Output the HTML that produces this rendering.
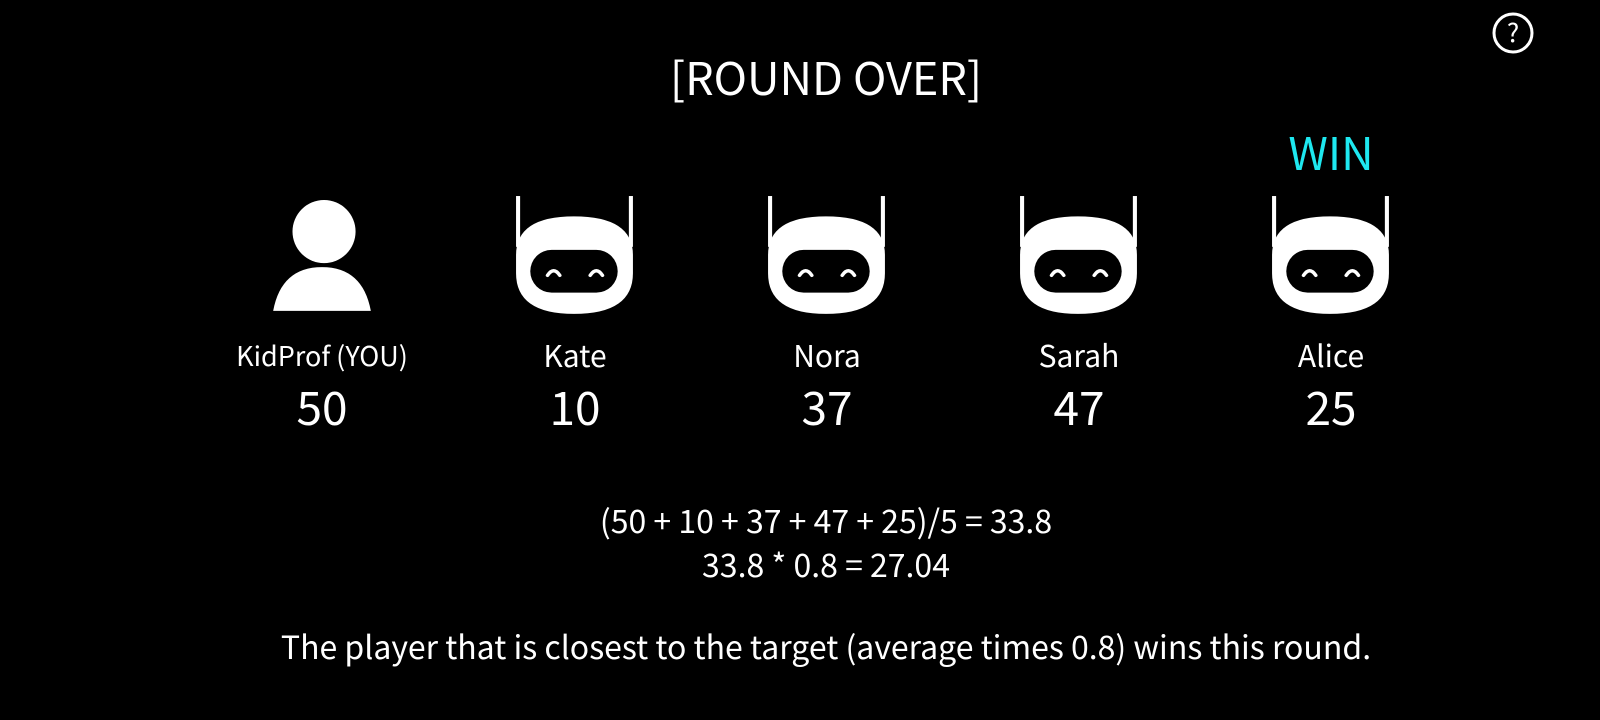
<!DOCTYPE html>
<html><head><meta charset="utf-8"><style>
html,body{margin:0;padding:0;background:#000;}
body{width:1600px;height:720px;position:relative;overflow:hidden;color:#fff;font-family:"Noto Sans CJK SC","Liberation Sans",sans-serif;}
.t{position:absolute;white-space:nowrap;transform:translateX(-50%);line-height:1;}
svg{position:absolute;}
.n{font-size:30px;top:339px;}
.s{font-size:46px;top:383px;}
</style></head><body>
<svg style="left:1491px;top:12px" width="44" height="44" viewBox="0 0 44 44"><circle cx="22" cy="21" r="19" fill="none" stroke="#fff" stroke-width="3"/><text x="22" y="30" text-anchor="middle" fill="#fff" font-size="26" font-family="Noto Sans CJK SC,Liberation Sans,sans-serif">?</text></svg>
<div class="t" style="left:826px;top:53px;font-size:45px;">[ROUND OVER]</div>
<div class="t" style="left:1331px;top:128px;font-size:45px;color:#1ee8f0;">WIN</div>

<svg style="left:271px;top:199px" width="102" height="117" viewBox="0 0 100 115"><circle cx="52" cy="32" r="31" fill="#fff"/><path d="M2 110 Q10 67 50 67 Q90 67 98 110 Z" fill="#fff"/></svg>

<svg style="left:515px;top:194px" width="120" height="124" viewBox="0 0 118 122"><g fill="#fff"><rect x="1" y="2" width="4" height="50"/><rect x="112" y="2" width="4" height="50"/><path d="M1 60 Q1 22 58 22 Q116 22 116 60 L116 78 Q116 118 58 118 Q1 118 1 78 Z"/></g><rect x="15" y="55" width="86" height="42" rx="21" fill="#000"/><g fill="none" stroke="#fff" stroke-width="3.5" stroke-linecap="round"><path d="M32 80 Q38 71 44 80"/><path d="M74 80 Q80 71 86 80"/></g></svg>
<svg style="left:767px;top:194px" width="120" height="124" viewBox="0 0 118 122"><g fill="#fff"><rect x="1" y="2" width="4" height="50"/><rect x="112" y="2" width="4" height="50"/><path d="M1 60 Q1 22 58 22 Q116 22 116 60 L116 78 Q116 118 58 118 Q1 118 1 78 Z"/></g><rect x="15" y="55" width="86" height="42" rx="21" fill="#000"/><g fill="none" stroke="#fff" stroke-width="3.5" stroke-linecap="round"><path d="M32 80 Q38 71 44 80"/><path d="M74 80 Q80 71 86 80"/></g></svg>
<svg style="left:1019px;top:194px" width="120" height="124" viewBox="0 0 118 122"><g fill="#fff"><rect x="1" y="2" width="4" height="50"/><rect x="112" y="2" width="4" height="50"/><path d="M1 60 Q1 22 58 22 Q116 22 116 60 L116 78 Q116 118 58 118 Q1 118 1 78 Z"/></g><rect x="15" y="55" width="86" height="42" rx="21" fill="#000"/><g fill="none" stroke="#fff" stroke-width="3.5" stroke-linecap="round"><path d="M32 80 Q38 71 44 80"/><path d="M74 80 Q80 71 86 80"/></g></svg>
<svg style="left:1271px;top:194px" width="120" height="124" viewBox="0 0 118 122"><g fill="#fff"><rect x="1" y="2" width="4" height="50"/><rect x="112" y="2" width="4" height="50"/><path d="M1 60 Q1 22 58 22 Q116 22 116 60 L116 78 Q116 118 58 118 Q1 118 1 78 Z"/></g><rect x="15" y="55" width="86" height="42" rx="21" fill="#000"/><g fill="none" stroke="#fff" stroke-width="3.5" stroke-linecap="round"><path d="M32 80 Q38 71 44 80"/><path d="M74 80 Q80 71 86 80"/></g></svg>

<div class="t n" style="left:322px;font-size:27px;top:341px;">KidProf (YOU)</div>
<div class="t n" style="left:575px;">Kate</div>
<div class="t n" style="left:827px;">Nora</div>
<div class="t n" style="left:1079px;">Sarah</div>
<div class="t n" style="left:1331px;">Alice</div>

<div class="t s" style="left:322px;">50</div>
<div class="t s" style="left:575px;">10</div>
<div class="t s" style="left:827px;">37</div>
<div class="t s" style="left:1079px;">47</div>
<div class="t s" style="left:1331px;">25</div>

<div class="t" style="left:826px;top:504px;font-size:32px;">(50 + 10 + 37 + 47 + 25)/5 = 33.8</div>
<div class="t" style="left:826px;top:548px;font-size:32px;">33.8 * 0.8 = 27.04</div>
<div class="t" style="left:826px;top:630px;font-size:32px;">The player that is closest to the target (average times 0.8) wins this round.</div>
</body></html>
